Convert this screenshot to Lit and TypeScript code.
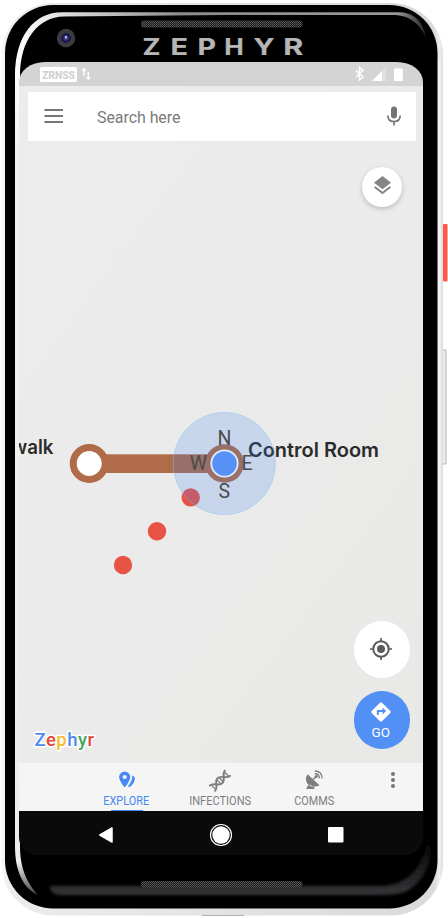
import { LitElement, html, css, svg } from "lit";
import { customElement } from "lit/decorators.js";

@customElement("phone-body")
class PhoneBody extends LitElement {
  static styles = css`
    :host { display: block; }
    svg { display: block; }
    .brand { font: 700 23px Inter, "Liberation Sans", sans-serif; fill: #b6b6b6; stroke: #b6b6b6; stroke-width: .2px; }
  `;
  render() {
    const letters: [string, number, number][] = [
      ["Z", 142.5, 18], ["E", 170.5, 17.5], ["P", 197.5, 18.5], ["H", 224.3, 19.5], ["Y", 253.5, 21], ["R", 283.3, 20],
    ];
    return html`
      <svg width="448" height="918" viewBox="0 0 448 918">
        <defs>
          <linearGradient id="shell" x1="0" x2="1" y1="0" y2="0">
            <stop offset="0" stop-color="#f8f8f9" />
            <stop offset=".02" stop-color="#ececee" />
            <stop offset=".98" stop-color="#dadadd" />
            <stop offset=".992" stop-color="#eeeef0" />
            <stop offset="1" stop-color="#dcdcdf" />
          </linearGradient>
          <linearGradient id="rim" x1="0" x2="1" y1="0" y2="0">
            <stop offset="0" stop-color="#fff" />
            <stop offset=".2" stop-color="#c8c8c8" />
            <stop offset=".4" stop-color="#8d8d8d" />
            <stop offset=".93" stop-color="#999" />
            <stop offset="1" stop-color="#222" />
          </linearGradient>
          <linearGradient id="left" x1="0" x2="0" y1="0" y2="1">
            <stop offset="0" stop-color="#fff" />
            <stop offset=".1" stop-color="#f2f2f2" />
            <stop offset=".96" stop-color="#ededee" />
            <stop offset="1" stop-color="#444" />
          </linearGradient>
          <linearGradient id="chin" x1="0" x2="0" y1="0" y2="1">
            <stop offset="0" stop-color="#000" />
            <stop offset="1" stop-color="#363639" />
          </linearGradient>
          <pattern id="mesh" width="2" height="2" patternUnits="userSpaceOnUse">
            <rect width="2" height="2" fill="#161616" />
            <rect width="1" height="1" fill="#606060" />
            <rect x="1" y="1" width="1" height="1" fill="#525252" />
          </pattern>
          <radialGradient id="lens">
            <stop offset="0" stop-color="#7680b8" />
            <stop offset=".25" stop-color="#242b67" />
            <stop offset=".48" stop-color="#10143d" />
            <stop offset=".55" stop-color="#3a3a40" />
            <stop offset="1" stop-color="#3b3c40" />
          </radialGradient>
          <filter id="soft"><feGaussianBlur stdDeviation="1.6" /></filter>
          <filter id="edge"><feGaussianBlur stdDeviation=".5" /></filter>
        </defs>
        <rect x="443" y="224" width="4.5" height="57.5" rx="1" fill="#ff5844" />
        <path d="M443 350h3v114h-3" fill="#ececee" stroke="#b5b5b8" />
        <rect x="1.5" y="3" width="441.5" height="912.500" rx="52" fill="url(#shell)" filter="url(#edge)" />
        <path d="M202 915.5H244" stroke="#b0b0b0" stroke-width="1" />
        <rect x="438.3" y="60" width="2.2" height="800" fill="#f4f4f6" />
        <rect x="5" y="5" width="432.500" height="903.500" rx="48" fill="#000" />
        <path d="M50 886H385Q421 882 428 838L431 850Q428 880 405 892Q396 895 380 895H60Q50 894 50 886Z" fill="url(#chin)" filter="url(#soft)" />
        <path d="M15 76C15 36 34 12.200 62 12.200H398C413 12.200 423 20 426 38C420 24 410 16 396 15H224L64 16.500C38 17 20 40 20 76Z" fill="url(#rim)" filter="url(#edge)" />
        <path d="M15 72H20V846C20 870 28 884 38 895C22 888 15 869 15 846Z" fill="url(#left)" />
        <rect x="141" y="20.500" width="161.500" height="7" rx="3" fill="url(#mesh)" />
        <rect x="141" y="881" width="161.500" height="7" rx="3" fill="url(#mesh)" />
        <circle cx="66" cy="38" r="9.200" fill="url(#lens)" />
        <circle cx="66" cy="37" r="1" fill="#dfe4ff" />
        ${letters.map(([c, x, w]) => svg`<text class="brand" x=${x} y="55" textLength=${w} lengthAdjust="spacingAndGlyphs">${c}</text>`)}
      </svg>`;
  }
}

@customElement("metro-map")
class MetroMap extends LitElement {
  static styles = css`
    :host { display: block; }
    svg { display: block; }
    .place { font: 600 20px Inter, Roboto, sans-serif; fill: #2b2b2b; }
    .dir { font: 400 19.5px Roboto, sans-serif; fill: #4c4c4c; text-anchor: middle; }
    .logo { font: 500 18.5px Roboto, Lato, sans-serif; paint-order: stroke; stroke: #fff; stroke-width: 3px; stroke-linejoin: round; }
    .b { fill: #4b8bf0; } .r { fill: #e5483b; } .y { fill: #f7bd2d; } .g { fill: #3fa75b; }
  `;
  render() {
    return html`
      <svg width="404" height="677" viewBox="19 86 404 677">
        <defs>
          <linearGradient id="ground" x1="0" y1="0" x2=".8" y2="1">
            <stop offset="0" stop-color="#ececeb" />
            <stop offset=".5" stop-color="#ebebeb" />
            <stop offset="1" stop-color="#e9e9e7" />
          </linearGradient>
        </defs>
        <rect x="19" y="86" width="404" height="677" fill="url(#ground)" />
        <rect x="89" y="454.3" width="135" height="18.7" fill="#b06b48" />
        <circle cx="89.2" cy="463.5" r="16" fill="#fff" stroke="#b06b48" stroke-width="7" />
        <circle cx="224.5" cy="463.5" r="19.3" fill="#b06b48" />
        ${[[190.7, 497.4], [157, 531.2], [123, 565]].map(([x, y]) => svg`<circle cx=${x} cy=${y} r="9.2" fill="#e75446" />`)}
        <text class="place" x="11.5" y="454" textLength="42" lengthAdjust="spacingAndGlyphs">walk</text>
        <text class="place" x="248" y="457" textLength="131" lengthAdjust="spacingAndGlyphs">Control Room</text>
        <circle cx="224.3" cy="463.5" r="51.2" fill="#3c82f5" fill-opacity=".2" stroke="#8fc6ee" stroke-opacity=".45" />
        <circle cx="224.5" cy="463.5" r="13.2" fill="#5692f6" stroke="#e4ebfa" stroke-width="1.8" />
        <text class="dir" x="224.5" y="444.5">N</text>
        <text class="dir" x="198.5" y="469.7">W</text>
        <text class="dir" x="247" y="469.7">E</text>
        <text class="dir" x="224.3" y="498">S</text>
        <text class="logo" x="34.5" y="745.7" textLength="59.500" lengthAdjust="spacing"><tspan class="b">Z</tspan><tspan class="r">e</tspan><tspan class="y">p</tspan><tspan class="b">h</tspan><tspan class="g">y</tspan><tspan class="r">r</tspan></text>
      </svg>`;
  }
}

@customElement("app-root")
class AppRoot extends LitElement {
  static styles = css`
    :host { display: block; width: 448px; height: 918px; background: #fff; font-family: Roboto, sans-serif; position: relative; overflow: hidden; }
    * { box-sizing: border-box; }
    svg { display: block; flex: none; }
    phone-body { position: absolute; inset: 0; }
    .screen { position: relative; width: 404px; margin: 62px 0 0 19px; display: flex; flex-direction: column; }
    .status { height: 24px; background: #d4d4d4; border-radius: 26px 26px 0 0 / 20px 20px 0 0; display: flex; align-items: center; padding: 0 20px 0 21px; }
    .badge { width: 37px; height: 15px; margin-right: 3px; }
    .badge text { font: 800 11.5px Roboto, sans-serif; fill: #d0d0d0; }
    .gap { flex: 1; }
    .map { position: relative; height: 677px; }
    .search { position: absolute; left: 9px; top: 6px; width: 388px; height: 48.5px; background: #fff; display: flex; align-items: center; padding: 0 10px 0 16px; }
    .burger { margin-top: -1px; }
    .hint { font-size: 16px; color: #7b7b7b; margin-left: 33px; flex: 1; line-height: 20px; padding-top: 3px; letter-spacing: -.07px; }
    .layers { position: absolute; left: 343px; top: 80.5px; width: 40px; height: 40px; border-radius: 50%; background: #fff; box-shadow: 0 2px 5px rgba(0,0,0,.2); display: grid; place-items: center; padding-bottom: 2px; }
    .fabs { position: absolute; left: 334.5px; top: 534.5px; display: flex; flex-direction: column; gap: 13px; }
    .fab { width: 56.5px; height: 57.5px; border-radius: 50%; background: #fff; display: flex; flex-direction: column; align-items: center; justify-content: center; padding: 0 2px 1px 0; }
    .go { background: #5290f5; color: #fff; font-size: 13.5px; font-weight: 400; line-height: 14px; padding-top: 2px; gap: 3px; }
    .tabs { height: 48px; background: #f5f5f5; display: flex; padding-left: 60px; }
    .tab { width: 94px; display: flex; flex-direction: column; align-items: center; position: relative; padding-top: 5px; fill: #7e7e7e; color: #7e7e7e; }
    .tab text { font: 400 12.5px Roboto, sans-serif; text-anchor: middle; }
    .tab.on { fill: #4788f4; color: #4788f4; }
    .tab.on::after { content: ""; position: absolute; bottom: 0; left: 32px; width: 32px; height: 1.5px; background: #4788f4; }
    .more { margin: 9px 0 0 27px; fill: #747474; }
    .nav { height: 44px; background: #0a0a0a; border-radius: 0 0 18px 18px; display: flex; align-items: center; padding: 3px 79px 0 79px; justify-content: space-between; }
  `;
  tab(label: string, width: number, icon: unknown, on = false) {
    return html`<div class="tab ${on ? "on" : ""}">
      <svg width="24" height="24" viewBox="0 0 24 24">${icon}</svg>
      <svg width="90" height="16"><text x="45.200" y="13" textLength=${width} lengthAdjust="spacingAndGlyphs">${label}</text></svg>
    </div>`;
  }
  render() {
    return html`
      <phone-body></phone-body>
      <div class="screen">
        <div class="status">
          <svg class="badge" viewBox="0 0 37 15"><rect width="37" height="15" rx="1.500" fill="#fff" /><text x="2" y="11.700" textLength="33" lengthAdjust="spacingAndGlyphs">ZRNSS</text></svg>
          <svg width="12" height="16" viewBox="0 0 12 16" fill="none" stroke="#fff" stroke-width="1.400"><path d="M4 10V3M8.300 5.500V13" /><path d="M1.500 4.700L4 1.500L6.500 4.700ZM5.800 11L8.300 14.200L10.800 11Z" fill="#fff" stroke="none" /></svg>
          <span class="gap"></span>
          <svg width="50" height="16" viewBox="0 0 50 16">
            <path d="M3 4.500L10 11L6.500 14V1.500L10 4.500L3 11" fill="none" stroke="#fff" stroke-width="1.400" />
            <path d="M33 1V15H19Z" fill="#e0e0e0" />
            <path d="M29 5V15H19Z" fill="#fff" />
            <path d="M41 3H49.800V15H41Z" fill="#fff" />
            <path d="M41.500 1.500H49V3H41.500Z" fill="#e6e6e6" />
          </svg>
        </div>
        <div class="map">
          <metro-map></metro-map>
          <div class="search">
            <svg class="burger" width="20" height="14" viewBox="0 0 20 14"><path d="M.500 1H19M.500 7H19M.500 13H19" stroke="#767676" stroke-width="1.800" /></svg>
            <span class="hint">Search here</span>
            <svg width="24" height="24" viewBox="0 0 24 24" fill="#757575"><path d="M12 14.500A3 3 0 0 0 15 11.500V5.500A3 3 0 0 0 9 5.500V11.500A3 3 0 0 0 12 14.500Z" /><path d="M5.800 11.500C5.800 15.500 8.500 17.500 12 17.500S18.200 15.500 18.200 11.500M12 17.500V21.500" fill="none" stroke="#757575" stroke-width="1.700" /></svg>
          </div>
          <div class="layers">
            <svg width="23" height="23" viewBox="0 0 24 24" fill="#858585"><path d="M11.990 18.540L4.620 12.810L3 14.070L12 21.070L21 14.070L19.370 12.800ZM12 16L19.360 10.270L21 9L12 2L3 9L4.630 10.270Z" /></svg>
          </div>
          <div class="fabs">
            <div class="fab">
              <svg width="24" height="24" viewBox="0 0 24 24" fill="none" stroke="#5b5b5b"><circle cx="12" cy="12" r="7.700" stroke-width="2" /><circle cx="12" cy="12" r="4" fill="#5b5b5b" stroke="none" /><path d="M12 1V5M12 19V23M1 12H5M19 12H23" stroke-width="1.700" /></svg>
            </div>
            <div class="fab go">
              <svg width="20" height="20" viewBox="0 0 20 20"><path d="M9 .700Q10 0 11 .700L19.300 9Q20 10 19.300 11L11 19.300Q10 20 9 19.300L.700 11Q0 10 .700 9Z" fill="#fff" /><path d="M6.800 13V9H12.500" fill="none" stroke="#5290f5" stroke-width="1.900" /><path d="M11.500 5.500L15.200 9L11.500 12.500Z" fill="#5290f5" /></svg>
              <span>GO</span>
            </div>
          </div>
        </div>
        <div class="tabs">
          ${this.tab("EXPLORE", 46, svg`
            <g transform="translate(.7 0)"><path fill-rule="evenodd" d="M10 3.500A5.600 5.600 0 0 0 4.400 9.100C4.400 13 10 19.500 10 19.500S15.600 13 15.600 9.100A5.600 5.600 0 0 0 10 3.500ZM10 6.900A2.100 2.100 0 1 1 10 11.100A2.100 2.100 0 1 1 10 6.900Z" />
            <path d="M17.500 7.500C19.800 8 20.500 10 20 12C19.300 15 17 17.800 14.500 19.200L13.300 18.200C16 14.500 18 11.500 17.500 7.500Z" /></g>`, true)}
          ${this.tab("INFECTIONS", 62, svg`
            <g transform="translate(12 12.700) rotate(-45) scale(.88)" fill="none" stroke="#7e7e7e" stroke-width="2.200" stroke-linecap="round">
              <path d="M-12 -4.200C-6.500 -4.200 -5.500 4 0 4S6.500 -4.200 12 -4.200" />
              <path d="M-12 4.200C-6.500 4.200 -5.500 -4 0 -4S6.500 4.200 12 4.200" />
              <path d="M-10.500 -3V3M-1.700 -3V3M1.700 -3V3M10.500 -3V3" stroke-width="1.500" />
            </g>`)}
          ${this.tab("COMMS", 40, svg`
            <path d="M5.600 6.200L17.500 17.300C12 20 7.500 18.500 5.300 15.400C3.300 12.500 3.500 9 5.600 6.200ZM6.500 16.500L4 21H12.800L11.600 18.500Z" />
            <path d="M11 11.500L14.200 8.500" stroke="#7e7e7e" stroke-width="1.500" />
            <circle cx="14.200" cy="8.600" r="1.500" />
            <path d="M12.800 3C17.400 2.900 20.300 6 20 10.400M12.800 5.800C15.800 5.700 17.500 7.600 17.300 10.300" fill="none" stroke="#7e7e7e" stroke-width="1.400" />`)}
          <svg class="more" width="24" height="16" viewBox="0 0 24 16"><circle cx="5" cy="2" r="2" /><circle cx="5" cy="8" r="2" /><circle cx="5" cy="14" r="2" /></svg>
        </div>
        <div class="nav">
          <svg width="16" height="18" viewBox="0 0 16 18"><path d="M14 2V16L1.800 9Z" fill="#fff" stroke="#fff" stroke-width="1.500" stroke-linejoin="round" /></svg>
          <svg width="24" height="24" viewBox="0 0 24 24"><circle cx="12" cy="12" r="10.500" fill="none" stroke="#fff" stroke-width="1.200" /><circle cx="12" cy="12" r="8.700" fill="#fff" /></svg>
          <svg width="16" height="16" viewBox="0 0 16 16"><rect width="15.500" height="15.500" rx="1" fill="#fff" /></svg>
        </div>
      </div>`;
  }
}
